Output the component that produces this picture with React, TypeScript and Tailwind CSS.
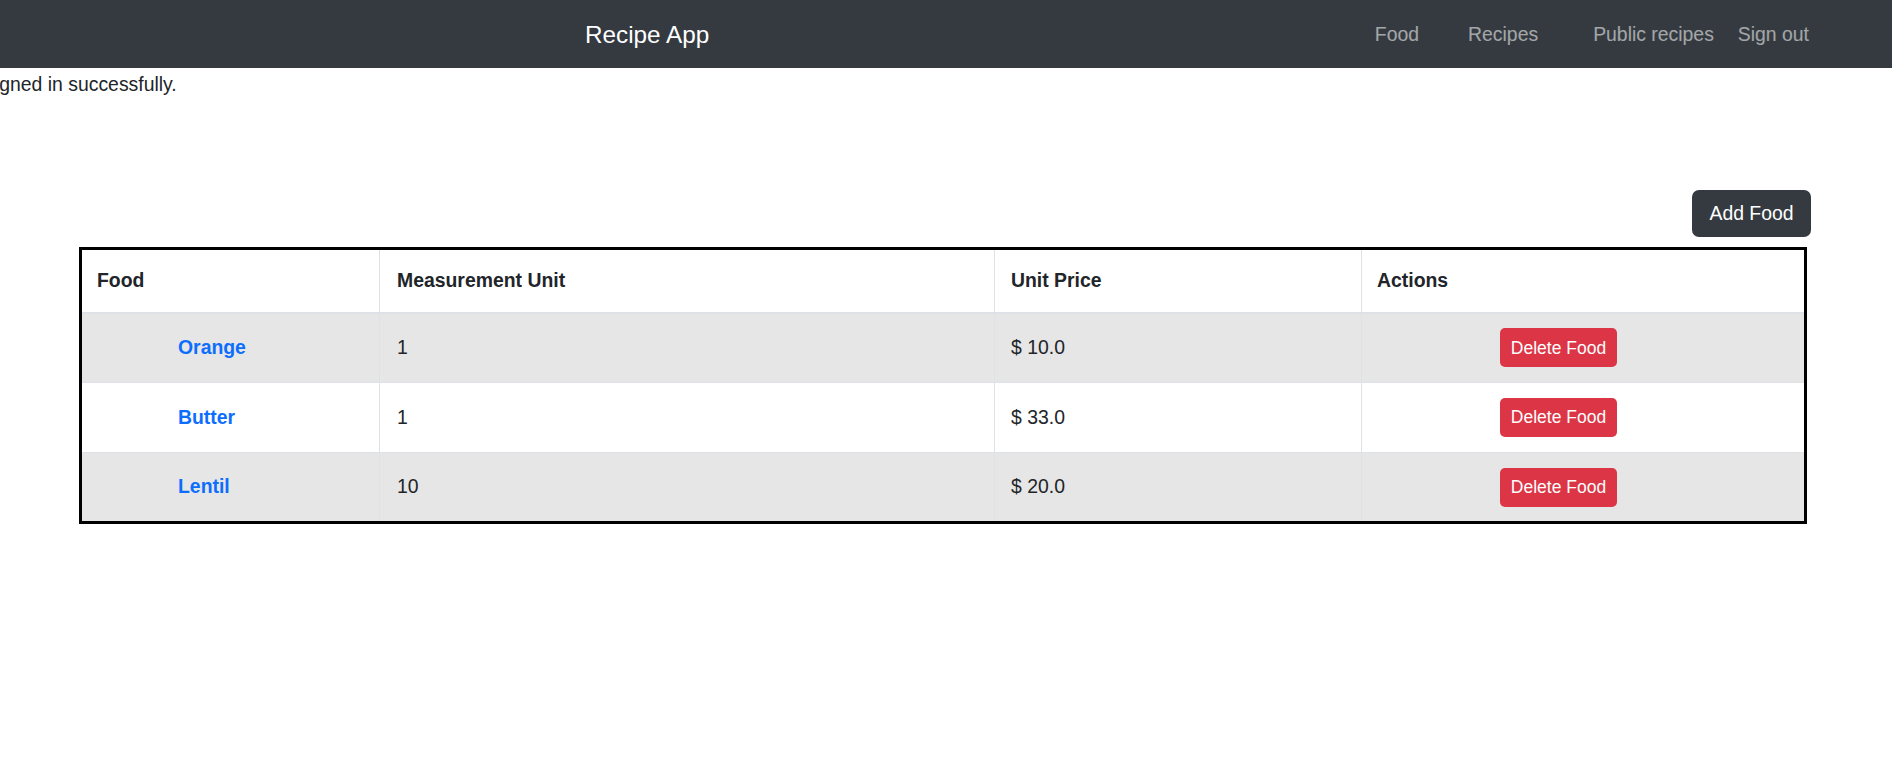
const foods = [
  { name: 'Orange', unit: '1', price: '$ 10.0' },
  { name: 'Butter', unit: '1', price: '$ 33.0' },
  { name: 'Lentil', unit: '10', price: '$ 20.0' },
]

const font = { fontFamily: '"Liberation Sans", Arial, sans-serif' }

function Navbar() {
  return (
    <nav className="flex h-[68px] w-[1892px] items-center bg-[#343a40]">
      <a href="#" className="ml-[585px] text-[24.3px] leading-[29px] text-white">
        Recipe App
      </a>
      <div className="flex-1" />
      <div className="mr-[83px] flex items-center text-[19.4px] leading-[29px] text-white/55">
        <a href="#">Food</a>
        <a href="#" className="ml-[49px]">Recipes</a>
        <a href="#" className="ml-[55px]">Public recipes</a>
        <a href="#" className="ml-[24px]">Sign out</a>
      </div>
    </nav>
  )
}

export default function App() {
  return (
    <div className="h-[773px] w-full overflow-hidden bg-white text-[#212529]" style={font}>
      <Navbar />

      <p className="mt-[2px] -ml-[18px] whitespace-nowrap text-[19.4px] leading-[29px]">
        Signed in successfully.
      </p>

      <div className="mt-[91px] ml-[79px] flex w-[1732px] justify-end">
        <button
          type="button"
          className="h-[47px] w-[119px] rounded-[7px] bg-[#343a40] text-[19.4px] text-white"
        >
          Add Food
        </button>
      </div>

      <table className="mt-[10px] ml-[79px] w-[1728px] border-collapse border-[3px] border-black text-[19.4px]">
        <thead>
          <tr className="border-b-2 border-[#dee2e6]">
            <th className="h-[64px] w-[299px] border-r border-[#dee2e6] px-[15px] py-0 text-left align-middle font-bold">
              Food
            </th>
            <th className="w-[615px] border-r border-[#dee2e6] px-[17px] py-0 text-left align-middle font-bold">
              Measurement Unit
            </th>
            <th className="w-[367px] border-r border-[#dee2e6] px-[16px] py-0 text-left align-middle font-bold">
              Unit Price
            </th>
            <th className="px-[15px] py-0 text-left align-middle font-bold">Actions</th>
          </tr>
        </thead>
        <tbody>
          {foods.map((f, i) => (
            <tr
              key={f.name}
              className={`border-b border-[#dee2e6] ${i % 2 === 0 ? 'bg-[#e6e6e6]' : 'bg-white'}`}
            >
              <td className="h-[70px] border-r border-[#dee2e6] py-0 pl-[96px] align-middle">
                <a href="#" className="font-bold text-[#0d6efd]">
                  {f.name}
                </a>
              </td>
              <td className="border-r border-[#dee2e6] px-[17px] py-0 align-middle">{f.unit}</td>
              <td className="border-r border-[#dee2e6] px-[16px] py-0 align-middle">{f.price}</td>
              <td className="py-0 pl-[138px] align-middle">
                <button
                  type="button"
                  className="h-[39px] w-[117px] rounded-[5px] bg-[#dc3545] text-[17.5px] text-white"
                >
                  Delete Food
                </button>
              </td>
            </tr>
          ))}
        </tbody>
      </table>
    </div>
  )
}
